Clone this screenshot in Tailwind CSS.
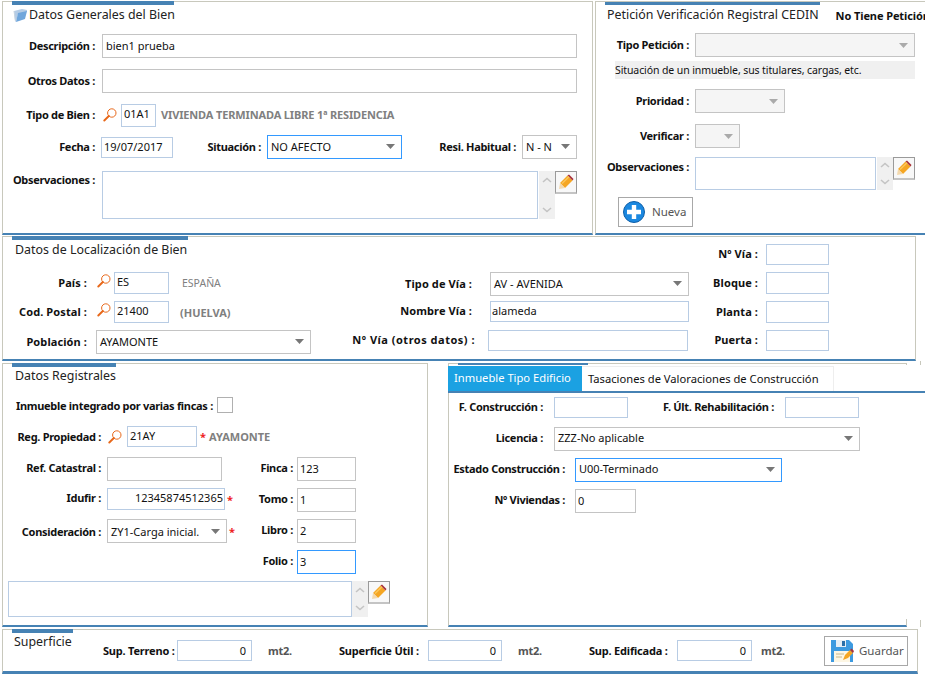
<!DOCTYPE html>
<html lang="es">
<head>
    <meta charset="UTF-8">
    <title>Datos Generales del Bien</title>
    <script src="https://cdn.jsdelivr.net/npm/@tailwindcss/browser@4"></script>
</head>
<body class="bg-white overflow-hidden [font-family:'Noto_Sans',sans-serif] text-[11px] leading-none text-[#111] [&_label]:whitespace-nowrap [&_label]:tracking-[-0.3px]">
<svg width="0" height="0" class="hidden">
    <defs>
        <symbol id="lupa" viewBox="0 0 14 14"><circle cx="8.800" cy="5" r="4.200" fill="none" stroke="#e8681a" stroke-width="1"/><path d="M5.800 8 L1.300 12.500" stroke="#e8681a" stroke-width="1.900" stroke-linecap="round"/></symbol>
        <symbol id="tri" viewBox="0 0 9 5"><path d="M0 0H9L4.500 5Z" fill="#777"/></symbol>
        <symbol id="tri-off" viewBox="0 0 9 5"><path d="M0 0H9L4.500 5Z" fill="#aaa"/></symbol>
        <symbol id="up" viewBox="0 0 10 6"><path d="M1 5L5 1.500L9 5" fill="none" stroke="#c4c4c4" stroke-width="1.600"/></symbol>
        <symbol id="down" viewBox="0 0 10 6"><path d="M1 1L5 4.500L9 1" fill="none" stroke="#c4c4c4" stroke-width="1.600"/></symbol>
        <symbol id="lapiz" viewBox="0 0 16 16"><path d="M2 9L9.500 1.500L14.500 6.500L7 14Z" fill="#f5a623"/><path d="M9.500 1.500L11 .5L15.500 5L14.500 6.500Z" fill="#a8323c"/><path d="M1 15L2 9L7 14Z" fill="#f3d9ae"/><path d="M4 9.500L11 2.800" stroke="#fcc75a" stroke-width="1.400"/></symbol>
    </defs>
</svg>

<div class="w-[925px] h-[678px] pt-px flex flex-col">

    <!-- Fila superior -->
    <div class="flex h-[234px] shrink-0">
        <div class="ml-[2px] w-[591px] h-[234px] border border-[#c8c8bc] border-b-[2px] border-b-[#4682b4] [&_label]:-translate-y-px">
            <div class="-mt-px ml-[9px] w-[162px] h-[4px] bg-[#4682b4]"></div>
            <div class="h-[20px] flex items-center">
                <svg class="ml-[10px] w-[15px] h-[15px]" viewBox="0 0 15 15"><path d="M1 3L9 1L14 2V4L5 6L3 14L2 13Z" fill="#b4cce6"/><path d="M3 14L5 5L14 3L12 11Z" fill="#6fa6dc"/><path d="M1 3L2.500 13" stroke="#c8d4e0" stroke-width="1"/></svg>
                <span class="ml-[1px] text-[12.400px] text-[#222]">Datos Generales del Bien</span>
            </div>

            <div class="mt-[9px] h-[24px] flex items-center">
                <label class="w-[92px] text-right font-bold">Descripción :</label>
                <input value="bien1 prueba" class="ml-[7px] w-[475px] h-[24px] px-[3px] pb-[2px] border border-[#c4c4c4] text-[11px]">
            </div>
            <div class="mt-[11px] h-[24px] flex items-center">
                <label class="w-[92px] text-right font-bold">Otros Datos :</label>
                <input class="ml-[7px] w-[475px] h-[24px] px-[3px] border border-[#c4c4c4]">
            </div>
            <div class="mt-[10px] h-[24px] flex items-center">
                <label class="w-[92px] text-right font-bold">Tipo de Bien :</label>
                <svg class="ml-[8px] w-[14px] h-[14px]"><use href="#lupa"/></svg>
                <input value="01A1" class="ml-[4px] w-[35px] h-[23px] px-[2px] pb-[4px] border border-[#b8cce4] text-[11px]">
                <span class="ml-[5px] font-bold text-[#808080] tracking-[-0.14px] -translate-y-px">VIVIENDA TERMINADA LIBRE 1ª RESIDENCIA</span>
            </div>
            <div class="mt-[8px] h-[24px] flex items-center">
                <label class="w-[92px] text-right font-bold">Fecha :</label>
                <input value="19/07/2017" class="ml-[6px] w-[72px] h-[21px] px-[2px] pb-[2px] border border-[#b8cce4] text-[11px]">
                <label class="w-[88px] text-right font-bold">Situación :</label>
                <div class="ml-[6px] w-[135px] h-[24px] pl-[3px] pr-[6px] pb-px border border-[#3399ff] flex items-center justify-between">NO AFECTO<svg class="w-[9px] h-[5px]"><use href="#tri"/></svg></div>
                <label class="w-[114px] text-right font-bold">Resi. Habitual :</label>
                <div class="ml-[6px] w-[55px] h-[24px] pl-[3px] pr-[6px] pb-px border border-[#c4c4c4] flex items-center justify-between">N - N<svg class="w-[9px] h-[5px]"><use href="#tri"/></svg></div>
            </div>
            <div class="mt-[12px] h-[48px] flex items-start">
                <label class="w-[92px] mt-[4px] text-right font-bold">Observaciones :</label>
                <textarea class="ml-[7px] w-[436px] h-[48px] border border-[#b8cce4] resize-none"></textarea>
                <div class="ml-px w-[16px] h-[48px] py-[6px] bg-[#f0f0f0] flex flex-col items-center justify-between">
                    <svg class="w-[10px] h-[6px]"><use href="#up"/></svg><svg class="w-[10px] h-[6px]"><use href="#down"/></svg>
                </div>
                <button class="w-[22px] h-[23px] border border-[#9a9a9a] border-b-[2px] border-b-[#c4c4c4] bg-[#f8f8f8] flex items-center justify-center"><svg class="w-[16px] h-[16px]"><use href="#lapiz"/></svg></button>
            </div>
        </div>

        <div class="ml-[2px] flex-1 min-w-0 h-[234px] overflow-hidden border-l border-t border-[#c8c8bc] border-b-[2px] border-b-[#4682b4] [&_label]:-translate-y-px">
            <div class="-mt-px ml-[9px] w-[215px] h-[4px] bg-[#4682b4]"></div>
            <div class="h-[20px] flex items-center whitespace-nowrap">
                <span class="ml-[11px] text-[12.400px] text-[#222]">Petición Verificación Registral CEDIN</span>
                <span class="ml-[17px] font-bold tracking-[-0.1px]">No Tiene Petición</span>
            </div>
            <div class="mt-[8px] h-[24px] flex items-center">
                <label class="w-[93px] text-right font-bold">Tipo Petición :</label>
                <div class="ml-[6px] w-[220px] h-[24px] pr-[6px] bg-[#f5f5f5] border border-[#c4c4c4] flex items-center justify-end"><svg class="w-[9px] h-[5px]"><use href="#tri-off"/></svg></div>
            </div>
            <div class="mt-[4px] ml-[19px] w-[300px] h-[18px] bg-[#f0f0f0] flex items-center text-[10.500px] tracking-[-0.1px]">Situación de un inmueble, sus titulares, cargas, etc.</div>
            <div class="mt-[10px] h-[24px] flex items-center">
                <label class="w-[93px] text-right font-bold">Prioridad :</label>
                <div class="ml-[6px] w-[90px] h-[24px] pr-[6px] bg-[#f5f5f5] border border-[#c4c4c4] flex items-center justify-end"><svg class="w-[9px] h-[5px]"><use href="#tri-off"/></svg></div>
            </div>
            <div class="mt-[11px] h-[24px] flex items-center">
                <label class="w-[93px] text-right font-bold">Verificar :</label>
                <div class="ml-[6px] w-[45px] h-[24px] pr-[6px] bg-[#f5f5f5] border border-[#c4c4c4] flex items-center justify-end"><svg class="w-[9px] h-[5px]"><use href="#tri-off"/></svg></div>
            </div>
            <div class="mt-[9px] h-[33px] flex items-start">
                <label class="w-[93px] mt-[5px] text-right font-bold">Observaciones :</label>
                <textarea class="ml-[6px] w-[181px] h-[33px] border border-[#b8cce4] resize-none"></textarea>
                <div class="ml-px w-[16px] h-[33px] py-[5px] bg-[#f0f0f0] flex flex-col items-center justify-between">
                    <svg class="w-[10px] h-[6px]"><use href="#up"/></svg><svg class="w-[10px] h-[6px]"><use href="#down"/></svg>
                </div>
                <button class="w-[22px] h-[23px] border border-[#9a9a9a] border-b-[2px] border-b-[#c4c4c4] bg-[#f8f8f8] flex items-center justify-center"><svg class="w-[16px] h-[16px]"><use href="#lapiz"/></svg></button>
            </div>
            <button class="mt-[7px] ml-[22px] w-[75px] h-[30px] pl-[4px] border border-[#a8a8a8] flex items-center text-[#555] text-[11.500px]">
                <svg class="w-[22px] h-[22px]" viewBox="0 0 22 22"><circle cx="11" cy="11" r="10.500" fill="#1b88e0"/><circle cx="11" cy="11" r="10.500" fill="none" stroke="#0f5fa8" stroke-width="1"/><path d="M8.800 4H13.200V8.800H18V13.200H13.200V18H8.800V13.200H4V8.800H8.800Z" fill="#fff"/></svg>
                <span class="ml-[7px]">Nueva</span>
            </button>
        </div>
    </div>

    <!-- Datos de Localizacion -->
    <div class="mt-px ml-[2px] w-[914px] h-[125px] shrink-0 flex border border-[#c8c8bc] border-b-[2px] border-b-[#4682b4] [&_label]:-translate-y-px [&_label]:tracking-[0.1px]!">
        <div class="w-[337px]">
            <div class="-mt-px ml-[9px] w-[176px] h-[4px] bg-[#4682b4]"></div>
            <div class="h-[20px] ml-[12px] flex items-center text-[12.400px] text-[#222]">Datos de Localización de Bien</div>
            <div class="mt-[12px] h-[22px] flex items-center">
                <label class="w-[84px] text-right font-bold">País :</label>
                <svg class="ml-[10px] w-[14px] h-[14px] -mt-[5px]"><use href="#lupa"/></svg>
                <input value="ES" class="ml-[3px] w-[55px] h-[22px] px-[2px] pb-[3px] border border-[#b8cce4] text-[11px]">
                <span class="ml-[13px] text-[#808080] text-[10.500px]">ESPAÑA</span>
            </div>
            <div class="mt-[7px] h-[22px] flex items-center">
                <label class="w-[84px] text-right font-bold">Cod. Postal :</label>
                <svg class="ml-[10px] w-[14px] h-[14px] -mt-[5px]"><use href="#lupa"/></svg>
                <input value="21400" class="ml-[3px] w-[55px] h-[22px] px-[2px] pb-[3px] border border-[#b8cce4] text-[11px]">
                <span class="ml-[11px] font-bold text-[#808080]">(HUELVA)</span>
            </div>
            <div class="mt-[7px] h-[24px] flex items-center">
                <label class="w-[84px] text-right font-bold">Población :</label>
                <div class="ml-[9px] w-[215px] h-[24px] pl-[3px] pr-[6px] pb-[2px] border border-[#c4c4c4] flex items-center justify-between">AYAMONTE<svg class="w-[9px] h-[5px]"><use href="#tri"/></svg></div>
            </div>
        </div>
        <div class="w-[360px] pt-[35px]">
            <div class="h-[24px] flex items-center">
                <label class="w-[132px] text-right font-bold">Tipo de Vía :</label>
                <div class="ml-[18px] w-[199px] h-[24px] pl-[3px] pr-[6px] pb-px border border-[#c4c4c4] flex items-center justify-between">AV - AVENIDA<svg class="w-[9px] h-[5px]"><use href="#tri"/></svg></div>
            </div>
            <div class="mt-[5px] h-[21px] flex items-center">
                <label class="w-[132px] text-right font-bold">Nombre Vía :</label>
                <input value="alameda" class="ml-[18px] w-[199px] h-[21px] px-px pb-[3px] border border-[#b8cce4] text-[11px]">
            </div>
            <div class="mt-[8px] h-[21px] flex items-center">
                <label class="w-[135px] text-right font-bold"><span class="tracking-[0.5px]">Nº Vía (otros datos) :</span></label>
                <input class="ml-[13px] w-[200px] h-[21px] border border-[#b8cce4]">
            </div>
        </div>
        <div class="pt-[7px]">
            <div class="h-[21px] flex items-center">
                <label class="w-[58px] text-right font-bold">Nº Vía :</label>
                <input class="ml-[8px] w-[63px] h-[21px] border border-[#b8cce4]">
            </div>
            <div class="mt-[7px] h-[22px] flex items-center">
                <label class="w-[58px] text-right font-bold">Bloque :</label>
                <input class="ml-[8px] w-[63px] h-[22px] border border-[#b8cce4]">
            </div>
            <div class="mt-[7px] h-[22px] flex items-center">
                <label class="w-[58px] text-right font-bold">Planta :</label>
                <input class="ml-[8px] w-[63px] h-[22px] border border-[#b8cce4]">
            </div>
            <div class="mt-[7px] h-[21px] flex items-center">
                <label class="w-[58px] text-right font-bold">Puerta :</label>
                <input class="ml-[8px] w-[63px] h-[21px] border border-[#b8cce4]">
            </div>
        </div>
    </div>

    <!-- Datos Registrales + pestañas -->
    <div class="mt-[2px] flex h-[264px] shrink-0">
        <div class="ml-[2px] w-[426px] h-[264px] border border-[#c8c8bc] border-b-[2px] border-b-[#4682b4]">
            <div class="-mt-px ml-[9px] w-[104px] h-[4px] bg-[#4682b4]"></div>
            <div class="h-[20px] ml-[12px] -mt-px flex items-center text-[12.400px] text-[#222]">Datos Registrales</div>
            <div class="mt-[11px] ml-[13px] h-[16px] flex items-center">
                <label class="font-bold w-[196px]">Inmueble integrado por varias fincas :</label>
                <span class="ml-[5px] w-[16px] h-[16px] border border-[#b0b0b0]"></span>
            </div>
            <div class="mt-[13px] h-[21px] flex items-center">
                <label class="w-[98px] text-right font-bold">Reg. Propiedad :</label>
                <svg class="ml-[7px] w-[14px] h-[14px]"><use href="#lupa"/></svg>
                <input value="21AY" class="ml-[5px] w-[70px] h-[21px] px-[2px] pb-[3px] border border-[#b8cce4] text-[11px]">
                <span class="ml-[3px] font-bold text-[#ee2222]">*</span>
                <span class="ml-[3px] font-bold text-[#808080]">AYAMONTE</span>
            </div>
            <div class="mt-[10px] flex">
                <div class="w-[250px]">
                    <div class="h-[24px] flex items-center [&_label]:-translate-y-[2px]">
                        <label class="w-[98px] text-right font-bold">Ref. Catastral :</label>
                        <input class="ml-[6px] w-[115px] h-[24px] border border-[#c4c4c4]">
                    </div>
                    <div class="mt-[7px] h-[22px] flex items-center [&_label]:-translate-y-[2px]">
                        <label class="w-[98px] text-right font-bold">Idufir :</label>
                        <input value="12345874512365" class="ml-[6px] w-[118px] h-[22px] px-px pb-[3px] border border-[#b8cce4] text-right text-[11px]">
                        <span class="ml-[2px] font-bold text-[#ee2222]">*</span>
                    </div>
                    <div class="mt-[9px] h-[24px] flex items-center">
                        <label class="w-[98px] text-right font-bold">Consideración :</label>
                        <div class="ml-[6px] w-[120px] h-[24px] pl-[3px] pr-[6px] border border-[#c4c4c4] flex items-center justify-between">ZY1-Carga inicial.<svg class="w-[9px] h-[5px]"><use href="#tri"/></svg></div>
                        <span class="ml-[2px] font-bold text-[#ee2222]">*</span>
                    </div>
                </div>
                <div class="[&_label]:-translate-y-[2px]">
                    <div class="h-[24px] flex items-center">
                        <label class="w-[40px] text-right font-bold">Finca :</label>
                        <input value="123" class="ml-[4px] w-[59px] h-[24px] px-[2px] pb-[1px] border border-[#c4c4c4] text-[11px]">
                    </div>
                    <div class="mt-[7px] h-[24px] flex items-center">
                        <label class="w-[40px] text-right font-bold">Tomo :</label>
                        <input value="1" class="ml-[4px] w-[59px] h-[24px] px-[2px] pb-[1px] border border-[#c4c4c4] text-[11px]">
                    </div>
                    <div class="mt-[7px] h-[24px] flex items-center">
                        <label class="w-[40px] text-right font-bold">Libro :</label>
                        <input value="2" class="ml-[4px] w-[59px] h-[24px] px-[2px] pb-[1px] border border-[#c4c4c4] text-[11px]">
                    </div>
                    <div class="mt-[7px] h-[24px] flex items-center">
                        <label class="w-[40px] text-right font-bold">Folio :</label>
                        <input value="3" class="ml-[4px] w-[59px] h-[24px] px-[2px] pb-[1px] border border-[#3399ff] text-[11px]">
                    </div>
                </div>
            </div>
            <div class="mt-[7px] ml-[5px] h-[36px] flex items-start">
                <textarea class="w-[344px] h-[36px] border border-[#b8cce4] resize-none"></textarea>
                <div class="w-[16px] h-[36px] py-[6px] bg-[#f0f0f0] flex flex-col items-center justify-between">
                    <svg class="w-[10px] h-[6px]"><use href="#up"/></svg><svg class="w-[10px] h-[6px]"><use href="#down"/></svg>
                </div>
                <button class="w-[22px] h-[23px] border border-[#9a9a9a] border-b-[2px] border-b-[#c4c4c4] bg-[#f8f8f8] flex items-center justify-center"><svg class="w-[16px] h-[16px]"><use href="#lapiz"/></svg></button>
            </div>
        </div>

        <div class="ml-[20px] w-[459px] h-[264px] border border-[#c8c8bc] border-b-[2px] border-b-[#4682b4]">
            <div class="-mt-px ml-[9px] w-[130px] h-[2px] bg-[#4682b4]"></div>
            <div class="relative h-[254px] bg-white w-[476px]">
                <div class="h-px"></div>
                <div class="h-[25px] -ml-px flex">
                    <div class="w-[134px] h-[25px] pl-[6px] pb-px bg-[#1ba1e2] text-white text-[11.200px] flex items-center">Inmueble Tipo Edificio</div>
                    <div class="w-[252px] h-[25px] pl-[6px] pb-px border-t border-r border-[#eeeeee] text-[11.200px] flex items-center">Tasaciones de Valoraciones de Construcción</div>
                </div>
                <div class="h-[2px] -ml-px bg-[#4682b4]"></div>
                <div class="mt-[4px] h-[21px] flex items-center [&_label]:-translate-y-px">
                    <label class="w-[94px] text-right font-bold">F. Construcción :</label>
                    <input class="ml-[11px] w-[74px] h-[21px] border border-[#b8cce4]">
                    <label class="ml-[34px] w-[112px] text-right font-bold">F. Últ. Rehabilitación :</label>
                    <input class="ml-[11px] w-[74px] h-[21px] border border-[#b8cce4]">
                </div>
                <div class="mt-[9px] h-[24px] flex items-center [&_label]:-translate-y-[2px]">
                    <label class="w-[94px] text-right font-bold">Licencia :</label>
                    <div class="ml-[11px] w-[306px] h-[24px] pl-[3px] pr-[6px] pb-[3px] border border-[#c4c4c4] flex items-center justify-between">ZZZ-No aplicable<svg class="w-[9px] h-[5px] mt-px"><use href="#tri"/></svg></div>
                </div>
                <div class="mt-[7px] h-[24px] flex items-center [&_label]:-translate-y-[2px]">
                    <label class="w-[116px] text-right font-bold">Estado Construcción :</label>
                    <div class="ml-[10px] w-[207px] h-[24px] pl-[3px] pr-[6px] pb-[3px] border border-[#3399ff] flex items-center justify-between">U00-Terminado<svg class="w-[9px] h-[5px] mt-px"><use href="#tri"/></svg></div>
                </div>
                <div class="mt-[7px] h-[24px] flex items-center [&_label]:-translate-y-[2px]">
                    <label class="w-[116px] text-right font-bold">Nº Viviendas :</label>
                    <input value="0" class="ml-[10px] w-[61px] h-[24px] px-[2px] pb-[2px] border border-[#c4c4c4] text-[11px]">
                </div>
            </div>
        </div>

        <div class="ml-[13px] w-px h-[266px] -mt-[2px] flex flex-col justify-between">
            <div class="h-[7px] bg-[#c8c8bc]"></div>
            <div class="h-[7px] bg-[#c8c8bc]"></div>
        </div>
    </div>

    <!-- Superficie -->
    <div class="mt-[2px] ml-[2px] w-[916px] h-[45px] shrink-0 flex border border-[#c8c8bc] border-b-[3px] border-b-[#4682b4] [&_label]:tracking-[-0.2px]!">
        <div class="w-[100px]">
            <div class="-mt-px ml-[9px] w-[61px] h-[4px] bg-[#4682b4]"></div>
            <div class="h-[18px] ml-[11px] flex items-center text-[12.400px] text-[#222]">Superficie</div>
        </div>
        <div class="mt-[10px] h-[21px] flex items-center">
            <label class="w-[74px] font-bold">Sup. Terreno :</label>
            <input value="0" class="w-[75px] h-[21px] px-[5px] border border-[#b8cce4] text-right text-[11px]">
            <span class="ml-[16px] w-[71px] font-bold text-[#555] tracking-[-0.3px]">mt2.</span>
            <label class="w-[89px] font-bold">Superficie Útil :</label>
            <input value="0" class="w-[74px] h-[21px] px-[5px] border border-[#b8cce4] text-right text-[11px]">
            <span class="ml-[16px] w-[71px] font-bold text-[#555] tracking-[-0.3px]">mt2.</span>
            <label class="w-[88px] font-bold">Sup. Edificada :</label>
            <input value="0" class="w-[75px] h-[21px] px-[5px] border border-[#b8cce4] text-right text-[11px]">
            <span class="ml-[9px] w-[63px] font-bold text-[#555] tracking-[-0.3px]">mt2.</span>
            <button class="w-[84px] h-[30px] pl-[5px] border border-[#a8a8a8] flex items-center text-[#555] text-[11.500px]">
                <svg class="w-[24px] h-[26px]" viewBox="0 0 24 26"><path d="M1 2H19L23 6V24H1Z" fill="#3d9ae0"/><path d="M6 2H16V9H6Z" fill="#e6eef6"/><path d="M12 3H15V8H12Z" fill="#2a6ea8"/><path d="M4 13H20V24H4Z" fill="#fdf6e3"/><path d="M6 16H14M6 19H12" stroke="#c8b88c" stroke-width="1"/><path d="M13 22L15 17L20 12L23 15L18 20Z" fill="#f5a623"/><path d="M20 12L21.500 10.500L24 13L23 15Z" fill="#a8323c"/></svg>
                <span class="ml-[5px]">Guardar</span>
            </button>
        </div>
    </div>
</div>
</body>
</html>
